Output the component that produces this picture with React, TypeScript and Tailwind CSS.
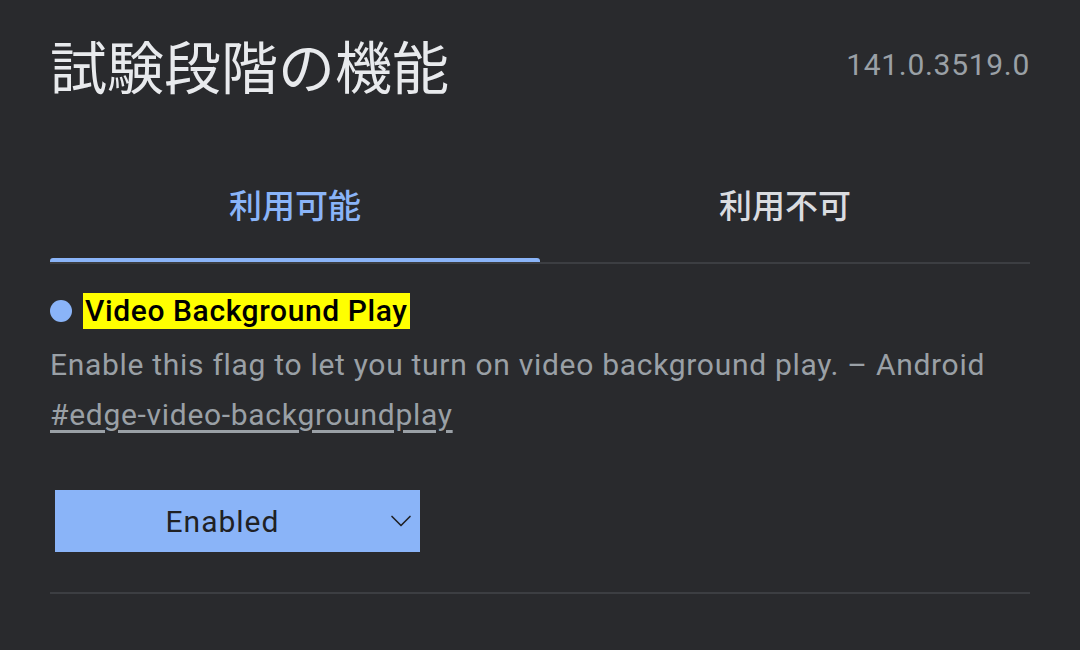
import { ChevronDown } from "lucide-react";

const font = { fontFamily: '"Roboto", "Noto Sans CJK JP", sans-serif' };

export default function App() {
  return (
    <div className="h-[650px] w-[1080px] overflow-hidden bg-[#292a2d] px-[50px]" style={font}>
      <header className="flex items-start justify-between pt-[34px]">
        <h1 className="text-[57px] leading-[72px] font-normal text-[#e8eaed]">試験段階の機能</h1>
        <span className="mt-[13px] text-[30px] leading-[36px] tracking-[0.7px] text-[#9aa0a6]">141.0.3519.0</span>
      </header>

      <div className="mt-[79px] flex border-b-2 border-[#3c3e42]">
        <div className="flex flex-1 flex-col items-center">
          <span className="text-[33px] font-medium leading-[44px] text-[#8ab4f8]">利用可能</span>
          <div className="mt-[29px] h-[4px] w-full rounded-t-[3px] bg-[#8ab4f8]" />
        </div>
        <div className="flex flex-1 flex-col items-center">
          <span className="text-[33px] font-medium leading-[44px] text-[#dadce0]">利用不可</span>
        </div>
      </div>

      <section className="border-b-2 border-[#3c3e42] pb-[40px]">
        <div className="mt-[29px] flex items-center gap-[11px]">
          <span className="h-[22px] w-[22px] rounded-full bg-[#8ab4f8]" />
          <h2 className="bg-[#ffff00] px-[2px] text-[30px] font-medium leading-[36px] tracking-[0.6px] text-black">
            Video Background Play
          </h2>
        </div>
        <p className="mt-[19px] text-[30px] leading-[34px] tracking-[0.7px] text-[#9aa0a6]">
          Enable this flag to let you turn on video background play. – Android
        </p>
        <a className="mt-[16px] block text-[30px] leading-[34px] tracking-[0.7px] text-[#9aa0a6] underline underline-offset-[5px]">
          #edge-video-backgroundplay
        </a>
        <button className="relative mt-[58px] ml-[5px] flex h-[62px] w-[365px] items-center justify-center bg-[#8ab4f8] pr-[30px] text-[30px] tracking-[1px] text-[#202124]">
          Enabled
          <ChevronDown className="absolute right-[1px] h-[36px] w-[36px]" strokeWidth={1.1} />
        </button>
      </section>
    </div>
  );
}
